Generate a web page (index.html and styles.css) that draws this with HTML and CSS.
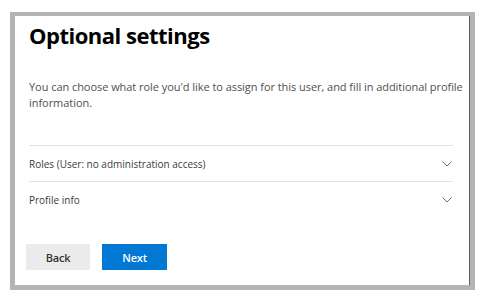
FILE: index.html
```html
<!DOCTYPE html>
<html lang="en">
<head>
    <meta charset="UTF-8">
    <meta name="viewport" content="width=device-width, initial-scale=1.0">
    <title>Optional settings</title>
    <link rel="stylesheet" href="styles.css">
</head>
<body>
    <div class="frame">
        <div class="panel">
            <h1>Optional settings</h1>

            <p class="intro">
                You can choose what role you'd like to assign for this user, and fill in additional profile information.
            </p>

            <div class="sections">
                <div class="section">
                    <span>Roles (User: no administration access)</span>
                    <svg class="chevron" width="10" height="6" viewBox="0 0 10 6">
                        <polyline points="0.5,0.5 5,5 9.5,0.5" />
                    </svg>
                </div>
                <div class="section">
                    <span>Profile info</span>
                    <svg class="chevron" width="10" height="6" viewBox="0 0 10 6">
                        <polyline points="0.5,0.5 5,5 9.5,0.5" />
                    </svg>
                </div>
            </div>

            <div class="actions">
                <button class="btn btn-back">Back</button>
                <button class="btn btn-next">Next</button>
            </div>
        </div>
    </div>
</body>
</html>
```

FILE: styles.css
```css
body {
    margin: 0;
    background: #fff;
    font-family: 'Open Sans', 'Noto Sans', sans-serif;
}
.frame {
    width: 455px;
    height: 269px;
    margin: 12px 0 0 10px;
    border: 5px solid #b4b4b4;
    border-top-width: 4px;
}
.panel {
    height: 100%;
    box-sizing: border-box;
    background: #fff;
    box-shadow: inset -1px 0 0 #5c5c5c;
    padding: 4px 17px 0 14px;
}
h1 {
    margin: 0;
    font-size: 22px;
    line-height: 30px;
    font-weight: 700;
    letter-spacing: -0.5px;
    color: #000;
}
.intro {
    margin: 29px -22px 0 0;
    font-size: 11px;
    line-height: 16px;
    letter-spacing: -0.05px;
    color: #505050;
}
.sections {
    margin-top: 34px;
    border-top: 1px solid #e1e1e1;
}
.section {
    display: flex;
    justify-content: space-between;
    align-items: center;
    padding: 10px 1px 9px 0;
    font-size: 10px;
    line-height: 16px;
    color: #3c3c3c;
}
.section + .section {
    border-top: 1px solid #e1e1e1;
}
.chevron polyline {
    fill: none;
    stroke: #707070;
    stroke-width: 1;
}
.actions {
    display: flex;
    gap: 12px;
    margin: 27px 0 0 -3px;
}
.btn {
    width: 64px;
    height: 26px;
    border: none;
    border-radius: 0;
    font-family: inherit;
    font-size: 11px;
    font-weight: 600;
    letter-spacing: -0.2px;
    cursor: pointer;
}
.btn-back {
    background: #ebebeb;
    color: #333;
}
.btn-next {
    width: 65px;
    background: #0078d4;
    color: #fff;
}
```
